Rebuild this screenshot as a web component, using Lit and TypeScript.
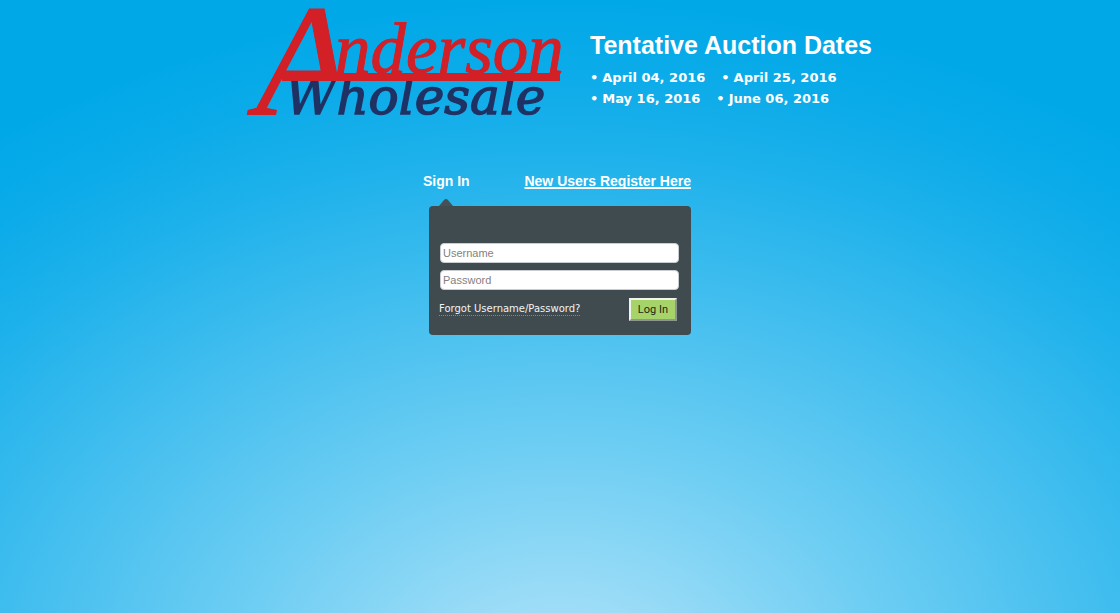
import { LitElement, html, css } from "lit";
import { customElement, property } from "lit/decorators.js";

@customElement("brand-logo")
class BrandLogo extends LitElement {
  static styles = css`
    :host {
      display: block;
      width: 314px;
      flex: none;
    }
    svg {
      display: block;
      width: 100%;
      overflow: visible;
    }
    .red {
      fill: #d31f26;
      stroke: #d31f26;
    }
    .initial {
      font: italic 158px "Liberation Serif", serif;
      stroke-width: 1;
    }
    .upper {
      font: italic 71px "Liberation Serif", serif;
      stroke-width: 1;
    }
    .bar {
      stroke: none;
    }
    .lower {
      font: italic 50px "DejaVu Serif", serif;
      fill: #1f3263;
      stroke: #1f3263;
      stroke-width: 1.5;
    }
  `;

  render() {
    return html`
      <svg viewBox="0 0 314 116" role="img" aria-label="Anderson Wholesale">
        <defs>
          <clipPath id="stem">
            <path d="M-10 0H120V80H34V118H-10Z" />
          </clipPath>
        </defs>
        <text class="lower" x="37" y="114">Wholesale</text>
        <g clip-path="url(#stem)">
          <text class="red initial" x="8" y="114">A</text>
        </g>
        <text class="red upper" x="87" y="73">nderson</text>
        <rect class="red bar" x="34" y="73" width="278" height="8" />
      </svg>
    `;
  }
}

@customElement("auction-dates")
class AuctionDates extends LitElement {
  @property({ attribute: false }) rows: string[][] = [];

  static styles = css`
    :host {
      display: block;
      color: #fff;
    }
    h1 {
      margin: 0 0 7px;
      font: bold 25px/30px "Liberation Sans", Arial, sans-serif;
    }
    .row {
      display: flex;
      gap: 16px;
      margin: 0;
      padding: 0;
      list-style: none;
      font: bold 13px/21px "DejaVu Sans", Verdana, sans-serif;
    }
    .row li::before {
      content: "•";
      margin-right: 4px;
    }
  `;

  render() {
    return html`
      <h1>Tentative Auction Dates</h1>
      ${this.rows.map(
        (row) => html`<ul class="row">${row.map((d) => html`<li>${d}</li>`)}</ul>`
      )}
    `;
  }
}

@customElement("sign-in")
class SignIn extends LitElement {
  static styles = css`
    :host {
      display: block;
      width: 262px;
      max-width: 100%;
      margin: 0 auto;
    }
    .tabs {
      display: flex;
      justify-content: space-between;
      margin: 0 0 7px -6px;
      color: #fff;
      font: bold 14px/20px "Liberation Sans", Arial, sans-serif;
    }
    h2 {
      margin: 0;
      font: inherit;
    }
    .register {
      color: inherit;
      text-decoration: underline;
      text-decoration-thickness: 2px;
      text-underline-offset: 1px;
      text-decoration-skip-ink: none;
    }
    .arrow {
      display: block;
      width: 14px;
      height: 8px;
      margin-left: 10px;
      fill: #465156;
    }
    .panel {
      padding: 37px 12px 14px 11px;
      border-radius: 4px;
      background: #3f4b4f;
    }
    .field {
      display: block;
      margin-bottom: 7px;
    }
    input {
      display: block;
      box-sizing: border-box;
      width: 100%;
      height: 20px;
      padding: 0 2px;
      border: 1px solid #c9cdd2;
      border-radius: 4px;
      background: #fff;
      color: #333;
      font: 11px "Liberation Sans", Arial, sans-serif;
    }
    input::placeholder {
      color: #857f80;
      opacity: 1;
    }
    .actions {
      display: flex;
      justify-content: space-between;
      align-items: center;
      padding: 1px 2px 0 0;
      margin-left: -1px;
    }
    .forgot {
      color: #f2f4f4;
      font: 10px/12px "DejaVu Sans", Verdana, sans-serif;
      text-decoration: none;
      border-bottom: 1px dotted #7d9275;
    }
    button {
      height: 23px;
      padding: 0 7px;
      border: 2px solid;
      border-color: #f0f4ea #8f9590 #8f9590 #f0f4ea;
      border-radius: 0;
      background: #a6d46b;
      color: #1c2a12;
      font: 11px Roboto, Tahoma, sans-serif;
    }
  `;

  render() {
    return html`
      <div class="tabs">
        <h2>Sign In</h2>
        <a class="register" href="#register">New Users Register Here</a>
      </div>
      <svg class="arrow" viewBox="0 0 14 8" aria-hidden="true">
        <path d="M0 8L5 2Q7 0 9 2L14 8Z" />
      </svg>
      <form class="panel" @submit=${(e: Event) => e.preventDefault()}>
        <label class="field">
          <input type="text" aria-label="Username" placeholder="Username" />
        </label>
        <label class="field">
          <input type="password" aria-label="Password" placeholder="Password" />
        </label>
        <div class="actions">
          <a class="forgot" href="#forgot">Forgot Username/Password?</a>
          <button type="submit">Log In</button>
        </div>
      </form>
    `;
  }
}

@customElement("app-root")
export class AppRoot extends LitElement {
  static styles = css`
    :host {
      display: block;
      box-sizing: border-box;
      min-height: 100vh;
      background: radial-gradient(
        ellipse 90% 120% at 50% 112%,
        #a9e2f9 0%,
        #9bdcf7 12%,
        #6fcef3 32%,
        #45bfef 53%,
        #1db1eb 73%,
        #0babe9 84%,
        #00a8e8 94%
      );
    }
    header {
      display: flex;
      flex-wrap: wrap;
      justify-content: center;
      gap: 28px;
      margin-bottom: 55px;
    }
    auction-dates {
      padding-top: 30px;
    }
  `;

  private rows = [
    ["April 04, 2016", "April 25, 2016"],
    ["May 16, 2016", "June 06, 2016"],
  ];

  render() {
    return html`
      <header>
        <brand-logo></brand-logo>
        <auction-dates .rows=${this.rows}></auction-dates>
      </header>
      <main><sign-in></sign-in></main>
    `;
  }
}
